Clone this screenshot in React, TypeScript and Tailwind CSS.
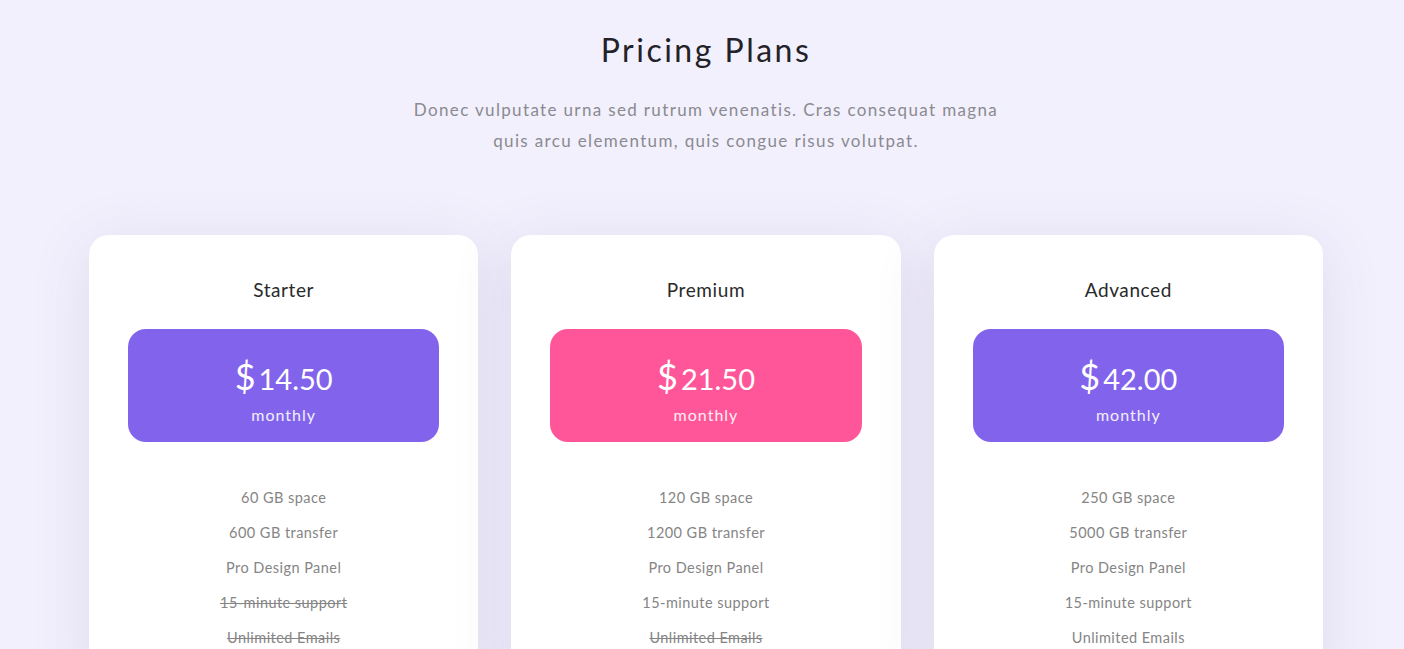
const plans = [
  {
    name: "Starter",
    price: "14.50",
    color: "bg-[#8263ec]",
    features: [
      { text: "60 GB space", off: false },
      { text: "600 GB transfer", off: false },
      { text: "Pro Design Panel", off: false },
      { text: "15-minute support", off: true },
      { text: "Unlimited Emails", off: true },
    ],
  },
  {
    name: "Premium",
    price: "21.50",
    color: "bg-[#ff5699]",
    features: [
      { text: "120 GB space", off: false },
      { text: "1200 GB transfer", off: false },
      { text: "Pro Design Panel", off: false },
      { text: "15-minute support", off: false },
      { text: "Unlimited Emails", off: true },
    ],
  },
  {
    name: "Advanced",
    price: "42.00",
    color: "bg-[#8263ec]",
    features: [
      { text: "250 GB space", off: false },
      { text: "5000 GB transfer", off: false },
      { text: "Pro Design Panel", off: false },
      { text: "15-minute support", off: false },
      { text: "Unlimited Emails", off: false },
    ],
  },
];

const App = () => {
  return (
    <div className="min-h-[649px] bg-[#f2f0fd] font-['Lato','Noto_Sans',sans-serif] overflow-hidden">
      <div className="flex flex-col items-center pl-[8px] pt-[30px]">
        <h1 className="text-[32px] leading-[40px] tracking-[2.5px] text-[#222228]">
          Pricing Plans
        </h1>
        <p className="mt-[24px] w-[660px] text-center text-[17px] leading-[31px] tracking-[1.35px] text-[#8a8a90]">
          Donec vulputate urna sed rutrum venenatis. Cras consequat magna
          <br />
          quis arcu elementum, quis congue risus volutpat.
        </p>

        <div className="mt-[79px] grid w-[1234px] grid-cols-3 gap-[33px]">
          {plans.map((plan) => (
            <div
              key={plan.name}
              className="h-[460px] rounded-[20px] bg-white px-[39px] pt-[43px] shadow-[0_10px_60px_rgba(90,80,140,0.13)]"
            >
              <h2 className="text-center text-[19px] leading-[24px] tracking-[0.6px] text-[#2a2a2a]">
                {plan.name}
              </h2>
              <div
                className={`mt-[27px] flex h-[113px] flex-col items-center justify-center rounded-[18px] pt-[12px] text-white ${plan.color}`}
              >
                <div className="flex items-baseline gap-[3px]">
                  <span className="text-[36px] leading-[36px]">$</span>
                  <span className="text-[29px] leading-[36px]">
                    {plan.price}
                  </span>
                </div>
                <span className="mt-[8px] text-[16px] leading-[20px] tracking-[1px] text-white/90">
                  monthly
                </span>
              </div>
              <ul className="mt-[46px] flex flex-col gap-[15px] text-center text-[14.5px] leading-[20px] tracking-[0.45px] text-[#858585]">
                {plan.features.map((f) => (
                  <li key={f.text} className={f.off ? "line-through" : ""}>
                    {f.text}
                  </li>
                ))}
              </ul>
            </div>
          ))}
        </div>
      </div>
    </div>
  );
};

export default App;
